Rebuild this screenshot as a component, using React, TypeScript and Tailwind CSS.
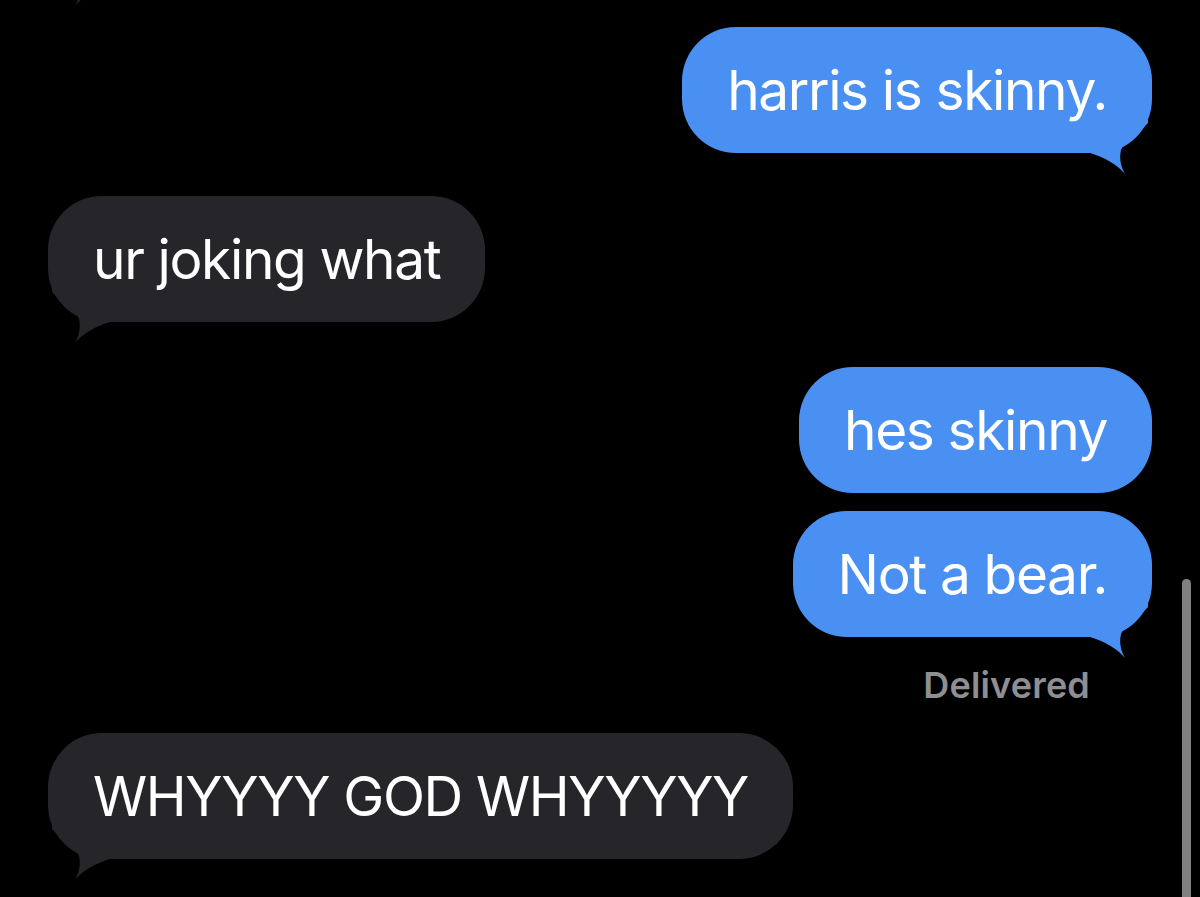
import React from "react";

const BLUE = "#4a90f3";
const GRAY = "#262529";

function Tail({ color, side }: { color: string; side: "left" | "right" }) {
  return (
    <svg
      width="70"
      height="60"
      viewBox="0 0 70 60"
      className={
        side === "right"
          ? "absolute right-0 bottom-[-24px]"
          : "absolute left-0 bottom-[-24px] -scale-x-100"
      }
    >
      <path
        d="M 8 36 C 22 40 36 48 43 57 C 39 50 37 42 39 33 C 42 24 55 18 66 6 L 66 0 L 8 0 Z"
        fill={color}
      />
    </svg>
  );
}

function Bubble({
  text,
  side,
  tail,
  className = "",
}: {
  text: string;
  side: "left" | "right";
  tail?: boolean;
  className?: string;
}) {
  const color = side === "right" ? BLUE : GRAY;
  return (
    <div
      className={`relative h-[126px] rounded-[54px] px-[45px] flex items-center text-white text-[55px] leading-none tracking-[-0.025em] whitespace-nowrap ${
        side === "right" ? "self-end bg-[#4a90f3]" : "self-start bg-[#262529]"
      } ${className}`}
      style={{ fontFamily: "Inter, 'Noto Sans', sans-serif" }}
    >
      <span className="relative z-10">{text}</span>
      {tail && <Tail color={color} side={side} />}
    </div>
  );
}

export default function App() {
  return (
    <div className="relative w-[1200px] h-[897px] bg-black overflow-hidden">
      <div className="flex flex-col px-[48px]">
        <Bubble text="" side="left" tail className="mt-[-141px] w-[400px]" />
        <Bubble text="harris is skinny." side="right" tail className="mt-[42px]" />
        <Bubble text="ur joking what" side="left" tail className="mt-[43px]" />
        <Bubble text="hes skinny" side="right" className="mt-[45px]" />
        <Bubble text="Not a bear." side="right" tail className="mt-[18px]" />
        <div
          className="self-end mr-[62px] mt-[28px] text-[36px] leading-[40px] font-semibold text-[#8e8e93] tracking-[0.005em]"
          style={{ fontFamily: "Inter, 'Noto Sans', sans-serif" }}
        >
          Delivered
        </div>
        <Bubble text="WHYYYY GOD WHYYYYY" side="left" tail className="mt-[28px]" />
      </div>
      <div className="absolute left-[1182px] top-[579px] w-[9px] h-[340px] rounded-full bg-[#808080]" />
    </div>
  );
}
